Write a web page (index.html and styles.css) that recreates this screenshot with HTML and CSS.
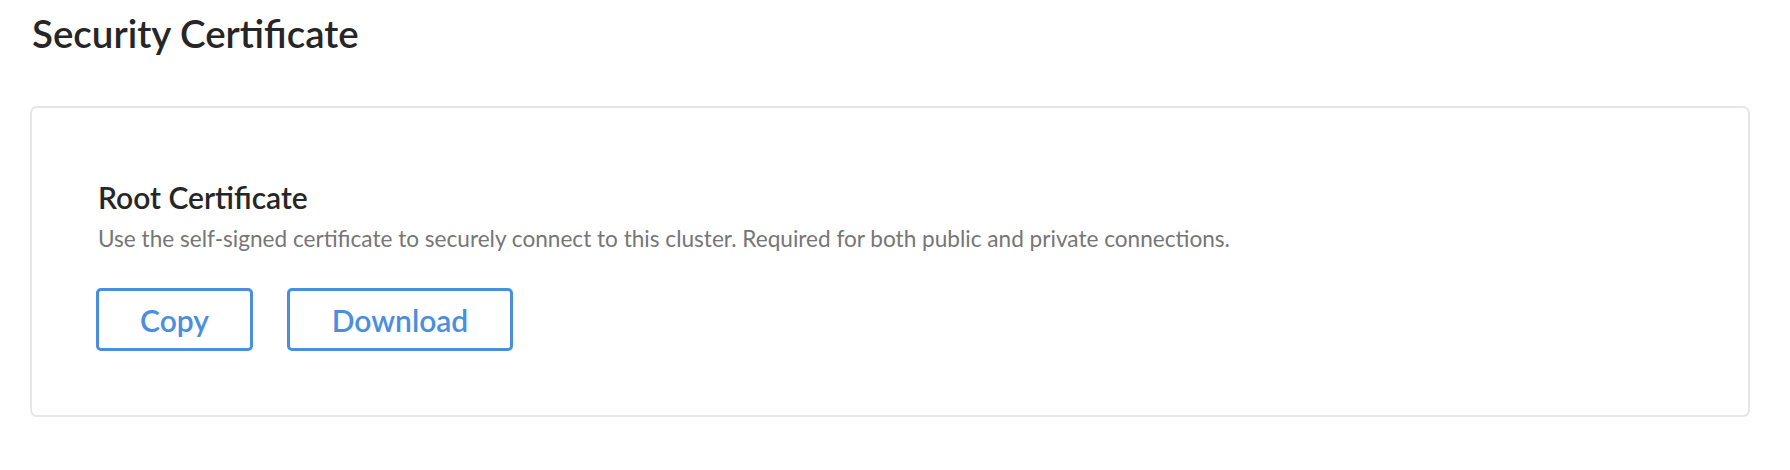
FILE: index.html
```html
<!DOCTYPE html>
<html lang="en">
<head>
<meta charset="utf-8">
<title>Security Certificate</title>
<link rel="stylesheet" href="styles.css">
</head>
<body>
  <main class="page">
    <h1 class="page-title">Security Certificate</h1>
    <section class="card">
      <h2 class="card-title">Root Certificate</h2>
      <p class="card-desc">Use the self-signed certificate to securely connect to this cluster. Required for both public and private connections.</p>
      <div class="actions">
        <button class="btn btn-copy" type="button">Copy</button>
        <button class="btn btn-download" type="button">Download</button>
      </div>
    </section>
  </main>
</body>
</html>
```

FILE: styles.css
```css
html, body {
  margin: 0;
  padding: 0;
  background: #ffffff;
}

body {
  font-family: "Lato", "Open Sans", sans-serif;
  color: #242424;
}

.page {
  padding: 12px 40px 0 30px;
}

.page-title {
  margin: 0;
  padding-left: 2px;
  font-size: 38.5px;
  line-height: 43px;
  font-weight: 600;
  color: #262626;
}

.card {
  margin-top: 51px;
  height: 311px;
  box-sizing: border-box;
  border: 2px solid #e6e6e6;
  border-radius: 7px;
  padding: 72px 64px 0 64px;
}

.card-title {
  margin: 0;
  padding-left: 2px;
  font-size: 30px;
  line-height: 34px;
  font-weight: 600;
  color: #262626;
}

.card-desc {
  margin: 12px 0 0 0;
  padding-left: 2px;
  font-size: 22.6px;
  line-height: 26px;
  color: #767676;
}

.actions {
  display: flex;
  gap: 34px;
  margin-top: 36px;
}

.btn {
  box-sizing: border-box;
  height: 63px;
  border: 3px solid #4a8ee0;
  border-radius: 5px;
  background: #ffffff;
  color: #4a8ee0;
  font-family: "Lato", "Open Sans", sans-serif;
  font-size: 30px;
  font-weight: 600;
  padding: 0;
  cursor: pointer;
}

.btn-copy {
  width: 157px;
}

.btn-download {
  width: 226px;
}
```
